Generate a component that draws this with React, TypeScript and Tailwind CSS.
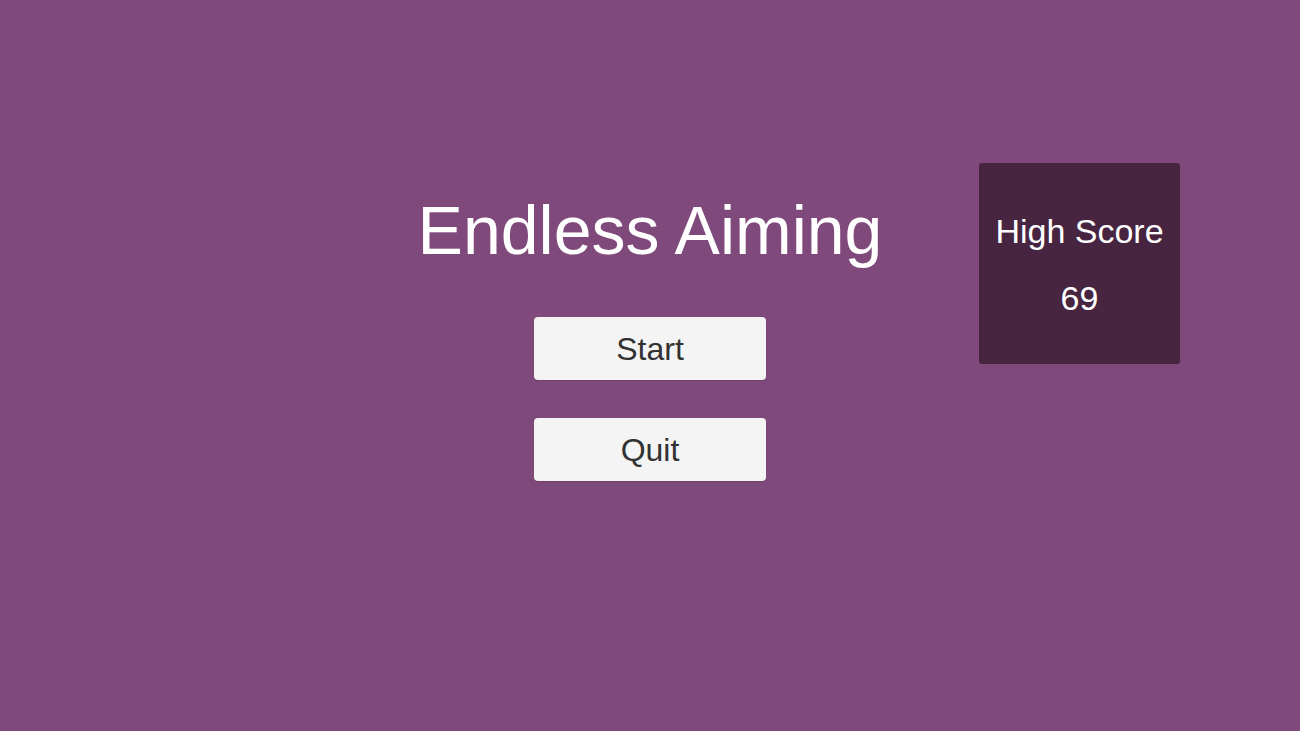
import React from "react";

const HIGH_SCORE = 69;

const MenuButton = ({ label }: { label: string }) => (
  <button className="flex h-[63px] w-[232px] items-center justify-center rounded-[4px] bg-[#f4f4f4] text-[32px] leading-none text-[#323232] shadow-[0_1px_1px_rgba(0,0,0,0.15)]">
    {label}
  </button>
);

export default function App() {
  return (
    <div
      className="grid h-screen w-full grid-cols-[1fr_500px_1fr] bg-[#7f4a7b]"
      style={{ fontFamily: '"Liberation Sans", Arial, sans-serif' }}
    >
      <div />

      {/* title + main menu */}
      <div className="flex flex-col items-center pt-[190px]">
        <h1 className="flex h-[80px] items-center text-[68px] font-normal leading-none text-white">
          Endless Aiming
        </h1>
        <div className="mt-[47px] flex flex-col gap-[38px]">
          <MenuButton label="Start" />
          <MenuButton label="Quit" />
        </div>
      </div>

      {/* best score panel */}
      <div className="pl-[79px] pt-[163px]">
        <div className="flex h-[201px] w-[201px] flex-col items-center rounded-[3px] bg-[#472541] text-white">
          <div className="mt-[50px] flex h-[36px] items-center text-[34px] leading-none">
            High Score
          </div>
          <div className="mt-[31px] flex h-[36px] items-center text-[34px] leading-none">
            {HIGH_SCORE}
          </div>
        </div>
      </div>
    </div>
  );
}
